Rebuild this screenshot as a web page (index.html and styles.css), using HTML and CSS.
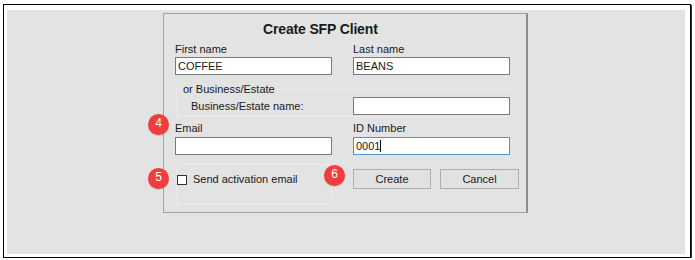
FILE: index.html
```html
<!DOCTYPE html>
<html>
<head>
<meta charset="utf-8">
<link rel="stylesheet" href="styles.css">
</head>
<body>
<div class="frame">
  <div class="panel">
    <div class="dialog">
      <div class="title">Create SFP Client</div>
      <div class="cols labels-1">
        <div class="label">First name</div>
        <div class="label">Last name</div>
      </div>
      <div class="cols inputs-1">
        <div class="field">COFFEE</div>
        <div class="field">BEANS</div>
      </div>
      <fieldset class="group">
        <legend class="legend">or Business/Estate</legend>
        <div class="group-row">
          <div class="label indent">Business/Estate name:</div>
          <div class="field"></div>
        </div>
      </fieldset>
      <div class="cols labels-2">
        <div class="label">Email</div>
        <div class="label">ID Number</div>
      </div>
      <div class="cols inputs-2">
        <div class="field"></div>
        <div class="field focused">0001<span class="caret"></span></div>
      </div>
      <div class="bottom">
        <div class="check-box">
          <div class="check-row">
            <span class="checkbox"></span>
            <span class="check-label">Send activation email</span>
          </div>
        </div>
        <div class="buttons">
          <div class="button create">Create</div>
          <div class="button cancel">Cancel</div>
        </div>
      </div>
      <div class="badge badge-4">4</div>
      <div class="badge badge-5">5</div>
      <div class="badge badge-6">6</div>
    </div>
  </div>
</div>
</body>
</html>
```
FILE: styles.css
```css
* { box-sizing: border-box; }
html, body { margin: 0; padding: 0; background: #ffffff; }
body {
  padding: 4px 0 0 3px;
  font-family: "Liberation Sans", Arial, sans-serif;
  color: #1a1a1a;
}
.frame {
  width: 688px;
  height: 254px;
  border: 1px solid #000;
  box-shadow: 1px 1px 0 #3a3a3a;
  padding: 5px 5px 3px 3px;
  background: #fff;
}
.panel {
  width: 100%;
  height: 100%;
  background: #e3e3e3;
  padding-top: 3px;
  padding-left: 156px;
}
.dialog {
  position: relative;
  width: 365px;
  height: 200px;
  border: 1px solid #a3a3a3;
  border-right: 2px solid #8c8c8c;
  background: #e3e3e3;
  padding: 7px 0 0 11px;
}
.title {
  font-size: 14px;
  font-weight: bold;
  line-height: 16px;
  margin-left: 88px;
  letter-spacing: -0.15px;
}
.cols {
  display: grid;
  grid-template-columns: 157px 157px;
  column-gap: 21px;
}
.label {
  font-size: 11px;
  line-height: 13px;
}
.labels-1 { margin-top: 6px; }
.inputs-1 { margin-top: 1px; }
.field {
  height: 18px;
  border: 1px solid #7a7a7a;
  background: #fff;
  font-size: 11px;
  line-height: 16px;
  padding-left: 2px;
  white-space: nowrap;
}
.field.focused { border-color: #4f93d6; }
.caret {
  display: inline-block;
  width: 1px;
  height: 12px;
  background: #000;
  vertical-align: -2px;
}
.group {
  margin: 8px 0 0 1px;
  width: 342px;
  border: 1px solid #eaeaea;
  padding: 1px 0 1px 4px;
  min-width: 0;
}
.legend {
  font-size: 11px;
  line-height: 13px;
  padding: 0 2px;
}
.group-row {
  display: grid;
  grid-template-columns: 172px 157px;
  align-items: center;
}
.indent { padding-left: 10px; }
.labels-2 { margin-top: 5px; }
.inputs-2 { margin-top: 2px; }
.bottom {
  display: flex;
  margin-top: 9px;
}
.check-box {
  margin-left: 1px;
  width: 156px;
  height: 41px;
  border: 1px solid #eaeaea;
  padding-top: 8px;
}
.check-row {
  display: flex;
  align-items: center;
  gap: 6px;
}
.checkbox {
  width: 10px;
  height: 10px;
  border: 1px solid #333;
  background: #fff;
}
.check-label {
  font-size: 11px;
  line-height: 13px;
}
.buttons {
  display: flex;
  gap: 9px;
  margin-left: 21px;
  margin-top: 5px;
}
.button {
  height: 20px;
  border: 1px solid #adadad;
  background: #e1e1e1;
  font-size: 11px;
  line-height: 18px;
  text-align: center;
}
.create { width: 78px; }
.cancel { width: 79px; }
.badge {
  position: absolute;
  width: 21px;
  height: 21px;
  border-radius: 50%;
  background: #f13d3b;
  color: #fff;
  font-size: 12px;
  line-height: 19px;
  text-align: center;
  box-shadow: 0 1px 1px rgba(0,0,0,0.15);
}
.badge-4 { left: -16px; top: 100px; }
.badge-5 { left: -16px; top: 154px; }
.badge-6 { left: 160px; top: 151px; }
```
